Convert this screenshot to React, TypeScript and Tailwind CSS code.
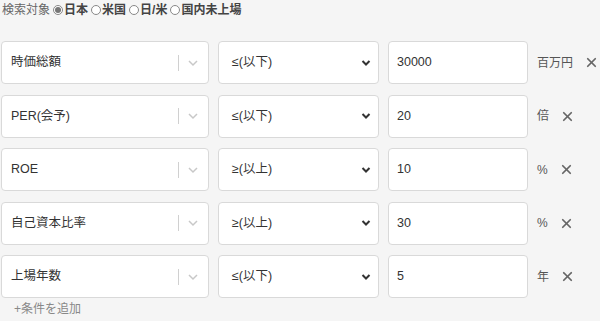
import { X } from "lucide-react";

type Cond = { field: string; op: string; value: string; unit: string };

const conds: Cond[] = [
  { field: "時価総額", op: "≤(以下)", value: "30000", unit: "百万円" },
  { field: "PER(会予)", op: "≤(以下)", value: "20", unit: "倍" },
  { field: "ROE", op: "≥(以上)", value: "10", unit: "%" },
  { field: "自己資本比率", op: "≥(以上)", value: "30", unit: "%" },
  { field: "上場年数", op: "≤(以下)", value: "5", unit: "年" },
];

const font = "font-['Liberation_Sans','Noto_Sans_CJK_JP',sans-serif]";

function Radio({ checked, label }: { checked?: boolean; label: string }) {
  return (
    <span className="flex items-center">
      <span className="w-[10px] h-[10px] rounded-full border border-[#888] flex items-center justify-center bg-white mr-[1px]">
        {checked && <span className="w-[6px] h-[6px] rounded-full bg-[#777]" />}
      </span>
      <span className="text-[#444] font-semibold">{label}</span>
    </span>
  );
}

function Row({ c }: { c: Cond }) {
  return (
    <div className="flex items-center h-[43px]">
      <div className="w-[208px] h-full bg-white border border-[#d9d9d9] rounded-[4px] flex items-center pl-[9px] pr-[9px]">
        <span className="flex-1 text-[12.5px] text-[#333]">{c.field}</span>
        <span className="w-px h-[16px] bg-[#d0d0d0] mr-[8px]" />
        <svg width="12" height="8" viewBox="0 0 12 8" className="text-[#c8c8c8]">
          <path d="M2 2 L6 6 L10 2" fill="none" stroke="currentColor" strokeWidth="1.5" />
        </svg>
      </div>
      <div className="ml-[9px] w-[161px] h-full bg-white border border-[#d9d9d9] rounded-[4px] flex items-center pl-[13px] pr-[7px]">
        <span className="flex-1 text-[12.5px] text-[#333]">{c.op}</span>
        <svg width="10" height="8" viewBox="0 0 10 8" className="text-[#333]">
          <path d="M1.5 2 L5 5.5 L8.5 2" fill="none" stroke="currentColor" strokeWidth="2" />
        </svg>
      </div>
      <div className="ml-[9px] w-[140px] h-full bg-white border border-[#d9d9d9] rounded-[4px] flex items-center pl-[8px]">
        <span className="text-[12.5px] text-[#333]">{c.value}</span>
      </div>
      <span className="ml-[9px] text-[12px] text-[#555]">{c.unit}</span>
      <X className="ml-[11px] w-[15px] h-[15px] text-[#666]" strokeWidth={2.75} />
    </div>
  );
}

export default function App() {
  return (
    <div className={`w-[600px] h-[321px] bg-[#f5f5f5] ${font} overflow-hidden`}>
      <div className="flex items-center gap-[3px] text-[12px] pl-[2px] pt-[3px] h-[17px]">
        <span className="text-[#666]">検索対象</span>
        <Radio checked label="日本" />
        <Radio label="米国" />
        <Radio label="日/米" />
        <Radio label="国内未上場" />
      </div>
      <div className="flex flex-col gap-[10.5px] pl-[1px] mt-[24px]">
        {conds.map((c) => (
          <Row key={c.field} c={c} />
        ))}
      </div>
      <div className="pl-[14px] mt-[2px] text-[12px] text-[#888]">+条件を追加</div>
    </div>
  );
}
